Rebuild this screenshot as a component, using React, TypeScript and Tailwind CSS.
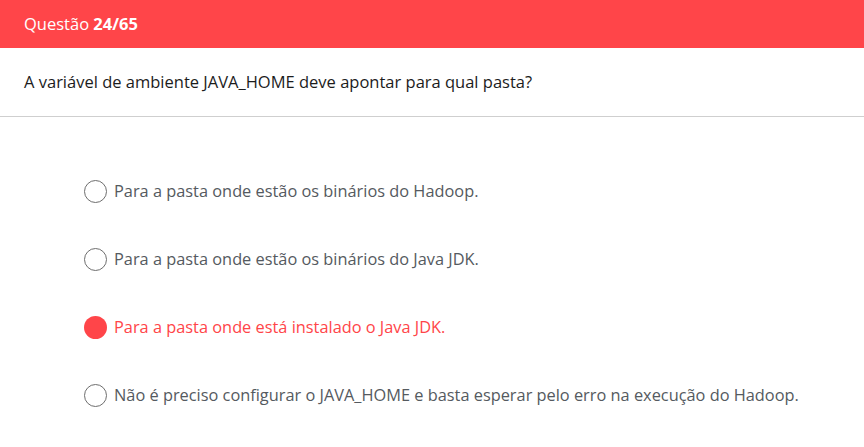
import { useState } from 'react';

const options = [
  'Para a pasta onde estão os binários do Hadoop.',
  'Para a pasta onde estão os binários do Java JDK.',
  'Para a pasta onde está instalado o Java JDK.',
  'Não é preciso configurar o JAVA_HOME e basta esperar pelo erro na execução do Hadoop.',
];

export default function App() {
  const [selected, setSelected] = useState(2);

  return (
    <div className="w-[864px] h-[447px] bg-white" style={{ fontFamily: '"Open Sans", sans-serif' }}>
      {/* Header */}
      <div className="h-[48px] bg-[#ff4549] flex items-center px-6 text-white text-[16.5px]">
        <span>
          Questão <b className="font-bold">24/65</b>
        </span>
      </div>

      {/* Question */}
      <div className="h-[69px] flex items-center px-6 text-[16.5px] text-[#1c1c1c] border-b border-[#cfcfcf]">
        A variável de ambiente JAVA_HOME deve apontar para qual pasta?
      </div>

      {/* Options */}
      <div className="flex flex-col gap-[46px] pl-[84px] pt-[63px]">
        {options.map((text, i) => {
          const active = i === selected;
          return (
            <button
              key={i}
              onClick={() => setSelected(i)}
              className="flex items-center gap-[7px] h-[22px] text-left text-[16.35px]"
            >
              {active ? (
                <span className="w-[23px] h-[23px] rounded-full bg-[#ff4549] shrink-0" />
              ) : (
                <span className="w-[23px] h-[23px] rounded-full border border-[#6e6e6e] shrink-0" />
              )}
              <span className={active ? 'text-[#ff4549]' : 'text-[#555a60]'}>{text}</span>
            </button>
          );
        })}
      </div>
    </div>
  );
}
